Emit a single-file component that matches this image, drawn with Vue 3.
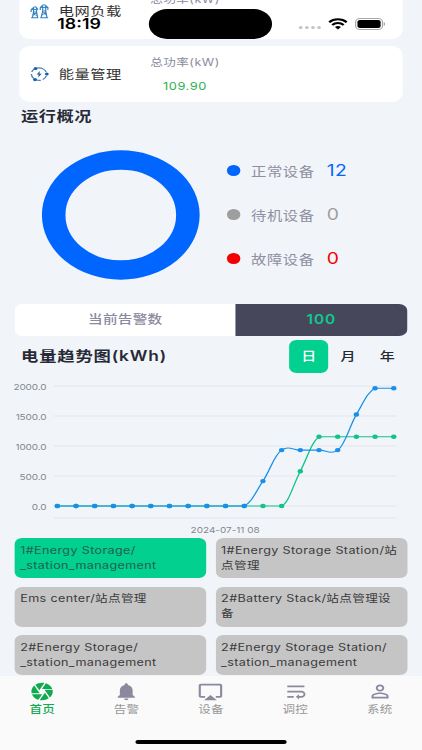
<script setup>
import { ref } from 'vue'

const meters = [
  { name: '电网负载', icon: 'grid', value: '' },
  { name: '能量管理', icon: 'energy', value: '109.90' }
]

const statuses = [
  { label: '正常设备', count: 12, color: '#0066ff' },
  { label: '待机设备', count: 0, color: '#9e9e9e' },
  { label: '故障设备', count: 0, color: '#f40000' }
]

const ranges = ['日', '月', '年']
const range = ref('日')

const ticks = ['2000.0', '1500.0', '1000.0', '500.0', '0.0']

// plot area: 2000 sits at y=6, 0 at y=126
const STEP = 15.32
const toY = v => 126 - v * 0.06
const toX = i => 3 + i * STEP

// [value, tangent] pairs, tangent is in px per step
const flat = n => Array.from({ length: n }, () => [0, 0])
const blue = [...flat(10), [0, -9], [415, -28], [932, -12], [932, 0], [932, 0], [932, -12], [1525, -32], [1963, -9], [1963, 0]]
const green = [...flat(12), [0, -9], [580, -36], [1153, -12], [1153, 0], [1153, 0], [1153, 0], [1153, 0]]

function linePath(points) {
  let d = `M${toX(0)} ${toY(points[0][0])}`
  for (let i = 1; i < points.length; i++) {
    const [pv, pt] = points[i - 1]
    const [v, t] = points[i]
    const same = pv === v && v !== 932
    const a = same ? 0 : pt * 0.4
    const b = same ? 0 : t * 0.4
    d += ` C${toX(i - 1) + STEP * 0.4} ${toY(pv) + a} ${toX(i) - STEP * 0.4} ${toY(v) - b} ${toX(i)} ${toY(v)}`
  }
  return d
}

const series = [
  { color: '#12c48b', points: green },
  { color: '#1890ea', points: blue }
]

const stations = [
  ['1#Energy Storage/', '_station_management'],
  ['1#Energy Storage Station/站', '点管理'],
  ['Ems center/站点管理'],
  ['2#Battery Stack/站点管理设', '备'],
  ['2#Energy Storage/', '_station_management'],
  ['2#Energy Storage Station/', '_station_management']
]
const station = ref(0)

const tabs = [
  { label: '首页', d: 'M9.4 10.5l4.77-8.26C13.47 2.09 12.75 2 12 2c-2.4 0-4.6.85-6.32 2.25l3.66 6.35.06-.1zM21.54 9c-.92-2.92-3.15-5.26-6-6.34L11.88 9h9.66zm.26 1h-7.49l.29.5 4.76 8.25C21 16.97 22 14.61 22 12c0-.69-.07-1.35-.2-2zM8.54 12l-3.9-6.75C3.01 7.03 2 9.39 2 12c0 .69.07 1.35.2 2h7.49l-1.15-2zm-6.08 3c.92 2.92 3.15 5.26 6 6.34L12.12 15H2.46zm11.27 0l-3.9 6.76c.7.15 1.42.24 2.17.24 2.4 0 4.6-.85 6.32-2.25l-3.66-6.35-.93 1.6z' },
  { label: '告警', d: 'M12 22c1.1 0 2-.9 2-2h-4c0 1.1.89 2 2 2zm6-6v-5c0-3.07-1.64-5.64-4.5-6.32V4c0-.83-.67-1.5-1.5-1.5s-1.5.67-1.5 1.5v.68C7.63 5.36 6 7.92 6 11v5l-2 2v1h16v-1l-2-2z' },
  { label: '设备', d: 'M6 22h12l-6-6zM21 3H3c-1.1 0-2 .9-2 2v12c0 1.1.9 2 2 2h4v-2H3V5h18v12h-4v2h4c1.1 0 2-.9 2-2V5c0-1.1-.9-2-2-2z' },
  { label: '调控', d: 'M4 19h6v-2H4v2zM20 5H4v2h16V5zm-3 6H4v2h13.25c1.1 0 2 .9 2 2s-.9 2-2 2H15v-2l-3 3 3 3v-2h2c2.21 0 4-1.79 4-4s-1.79-4-4-4z' },
  { label: '系统', d: 'M12 5.9c1.16 0 2.1.94 2.1 2.1s-.94 2.1-2.1 2.1S9.9 9.16 9.9 8s.94-2.1 2.1-2.1m0 9c2.97 0 6.1 1.46 6.1 2.1v1.1H5.9V17c0-.64 3.13-2.1 6.1-2.1M12 4C9.79 4 8 5.79 8 8s1.79 4 4 4 4-1.79 4-4-1.79-4-4-4zm0 9c-2.67 0-8 1.34-8 4v3h16v-3c0-2.66-5.33-4-8-4z' }
]
const tab = ref(0)
</script>

<template>
  <div class="screen">
    <main class="content">
      <section v-for="m in meters" :key="m.name" class="meter">
        <svg v-if="m.icon === 'grid'" class="meter-icon" viewBox="0 0 16 16" fill="none" stroke="#3584bf" stroke-width="1">
          <path d="M1.500 6.500 4 4h1.500L7 6.500M1.500 6.500V9M1.500 6.500H7M3.500 5v4l-1 5.500M6 5v4l.8 5.500M3.500 9h2.500M3.300 10l3 2.500M6 10l-3.300 2.500M1.500 14.700h6" />
          <path d="M9 4.500 11 2h2l2.300 2.500M9 4.500V7M9 4.500h6.300V7M11 3v5l-1.300 6.500M13.500 3v5l1 6.500M11 8h2.500M10.700 9l3.300 3M13.700 9l-3.500 3M9 14.700h6.500" />
        </svg>
        <svg v-else class="meter-icon" viewBox="0 0 16 16" fill="none" stroke="#4b80b4" stroke-width="1.100">
          <path d="M2 6A6.300 6.300 0 0 1 5 2.600M6.500 2A6.300 6.300 0 0 1 13.800 6M14 9.800a6.300 6.300 0 0 1-3 3.700M9.500 14.200a6.300 6.300 0 0 1-4-.500M3.700 12.500A6.300 6.300 0 0 1 1.700 8" />
          <g fill="#1762a8" stroke="none">
            <circle cx="5.200" cy="2.500" r="1.600" />
            <circle cx="14.400" cy="8" r="1.600" />
            <circle cx="4.700" cy="13.600" r="1.600" />
            <path d="M8.700 5 6 8.500h1.700L7.200 11.500 10.200 7.700H8.400z" />
          </g>
        </svg>
        <span class="meter-name">{{ m.name }}</span>
        <div class="meter-data">
          <span class="meter-label">总功率(kW)</span>
          <span class="meter-value">{{ m.value }}</span>
        </div>
      </section>

      <h2 class="title">运行概况</h2>

      <section class="overview">
        <svg class="donut" width="130" height="130" viewBox="0 0 130 130">
          <circle cx="65" cy="65" r="55" fill="none" stroke="#0066ff" stroke-width="19.300" />
        </svg>
        <ul class="legend">
          <li v-for="s in statuses" :key="s.label">
            <i class="dot" :style="{ background: s.color }"></i>
            <span class="legend-label">{{ s.label }}</span>
            <span class="legend-count" :style="{ color: s.color }">{{ s.count }}</span>
          </li>
        </ul>
      </section>

      <section class="alarm">
        <span class="alarm-label">当前告警数</span>
        <span class="alarm-count">100</span>
      </section>

      <header class="trend-head">
        <h2 class="title">电量趋势图(kWh)</h2>
        <div class="ranges">
          <button v-for="r in ranges" :key="r" :class="{ active: r === range }" @click="range = r">{{ r }}</button>
        </div>
      </header>

      <section class="chart">
        <div class="axis">
          <span v-for="t in ticks" :key="t">{{ t }}</span>
        </div>
        <div class="plot">
          <svg width="282" height="139" viewBox="0 0 282 139">
            <path v-for="y in [6, 36, 66, 96, 126, 138]" :key="y" :d="`M0 ${y}H281`" stroke="#e4e6eb" stroke-width="1" />
            <g v-for="s in series" :key="s.color">
              <path :d="linePath(s.points)" fill="none" :stroke="s.color" stroke-width="1.100" />
              <circle v-for="(p, i) in s.points" :key="i" :cx="toX(i)" :cy="toY(p[0])" r="2.200" :fill="s.color" />
            </g>
          </svg>
          <span class="date">2024-07-11 08</span>
        </div>
      </section>

      <section class="stations">
        <button v-for="(lines, i) in stations" :key="i" :class="{ active: i === station }" @click="station = i">
          <span v-for="l in lines" :key="l">{{ l }}</span>
        </button>
      </section>
    </main>

    <nav class="tabbar">
      <div class="tabs">
        <a v-for="(t, i) in tabs" :key="t.label" :class="{ active: i === tab }" @click="tab = i">
          <svg width="21" height="21" viewBox="0 0 24 24"><path :d="t.d" fill="currentColor" /></svg>
          <span>{{ t.label }}</span>
        </a>
      </div>
      <i class="home-bar"></i>
    </nav>

    <div class="status">
      <span class="time">18:19</span>
      <i class="island"></i>
      <span class="signal"><i v-for="n in 4" :key="n"></i></span>
      <svg class="wifi" width="16" height="12" viewBox="0 0 16 12" fill="none" stroke="#000" stroke-width="2">
        <path d="M.8 4.200a10.300 10.300 0 0 1 14.400 0M3.300 7a6.800 6.800 0 0 1 9.400 0" />
        <path d="M8 11.600 5.500 9.100a3.600 3.600 0 0 1 5 0z" fill="#000" stroke="none" />
      </svg>
      <svg class="battery" width="25" height="12" viewBox="0 0 25 12">
        <rect x=".5" y=".5" width="22" height="11" rx="3.500" fill="none" stroke="#a8a8a8" />
        <rect x="2" y="2" width="19" height="8" rx="2.200" />
        <path d="M23.500 4v4c1.600-.6 1.600-3.400 0-4z" fill="#a8a8a8" />
      </svg>
    </div>
  </div>
</template>

<style>
html,
body {
  overflow: hidden;
  background: #f1f5f9;
}
</style>

<style scoped>
.screen {
  position: relative;
  display: flex;
  flex-direction: column;
  width: 345.9px;
  height: 750px;
  overflow: hidden;
  transform: scaleX(1.22);
  transform-origin: 0 0;
  background: #f1f5f9;
  font-family: Inter, 'Noto Sans CJK SC', sans-serif;
  letter-spacing: 0.44px;
  color: #333;
}

.content {
  display: flex;
  flex-direction: column;
  height: 676px;
  overflow: hidden;
}

.meter {
  display: flex;
  align-items: center;
  flex-shrink: 0;
  height: 56.5px;
  margin: 0 15.6px 6.5px;
  padding-left: 8px;
  border-radius: 9px;
  background: #fff;
}

.meter:first-child { margin-top: -17.5px; }

.meter-icon {
  width: 16px;
  height: 16px;
}

.meter-name {
  width: 75px;
  margin-left: 8.5px;
  font-size: 12.5px;
}

.meter-data {
  display: flex;
  flex-direction: column;
  align-items: center;
  align-self: stretch;
  padding-top: 8px;
}

.meter-label {
  font-size: 10.3px;
  line-height: 17px;
  letter-spacing: 0.4px;
  color: #8c8ba0;
}

.meter-value {
  margin-top: 9px;
  font-size: 10.5px;
  line-height: 14px;
  color: #2ab24e;
}

.title {
  margin: 0;
  font-size: 14.1px;
  font-weight: 600;
  line-height: 20px;
  color: #272a36;
}

.content > .title {
  margin: -3px 0 0 17.2px;
}

.overview {
  display: flex;
  flex-shrink: 0;
  height: 130px;
  margin: 24.2px 0 0 33.6px;
}

.legend {
  display: flex;
  flex-direction: column;
  justify-content: space-between;
  height: 112px;
  margin: 9px 0 0 22.7px;
  padding: 0;
  list-style: none;
}

.legend li {
  display: flex;
  align-items: center;
  height: 24px;
}

.dot {
  width: 10.8px;
  height: 10.8px;
  border-radius: 50%;
}

.legend-label {
  width: 62px;
  margin-left: 8.7px;
  font-size: 12.6px;
  color: #8f8fa2;
}

.legend-count { font-size: 15.8px; }

.alarm {
  display: flex;
  flex-shrink: 0;
  height: 32.5px;
  margin: 24px 12.3px 0;
  border-radius: 7px;
  overflow: hidden;
  font-size: 12px;
  line-height: 32.5px;
  text-align: center;
}

.alarm-label {
  width: 180.8px;
  background: #fff;
  color: #8a8a9e;
  font-weight: 500;
  letter-spacing: 0.2px;
}

.alarm-count {
  flex: 1;
  background: #46475b;
  color: #12c88f;
  font-size: 12.6px;
  font-weight: 600;
  letter-spacing: 0.7px;
}

.trend-head {
  display: flex;
  justify-content: space-between;
  align-items: center;
  flex-shrink: 0;
  height: 32.5px;
  margin: 4px 12.3px 0 17.2px;
}

.trend-head .title {
  font-size: 14.2px;
  letter-spacing: 0.7px;
}

.ranges { display: flex; }

.ranges button {
  width: 32.2px;
  height: 32.5px;
  padding: 0;
  border: 0;
  border-radius: 6px;
  background: none;
  color: #272a36;
  font: 500 12.3px 'Noto Sans CJK SC', sans-serif;
}

.ranges .active {
  background: #02d08e;
  color: #fff;
}

.chart {
  display: flex;
  flex-shrink: 0;
  height: 165px;
  margin-top: 7.5px;
}

.axis {
  width: 38px;
  margin-right: 6.2px;
  font-size: 8.2px;
  line-height: 30px;
  text-align: right;
  letter-spacing: -0.1px;
  color: #85878d;
}

.axis span {
  display: block;
  height: 30px;
}

.axis span:first-child { margin-top: -8.5px; }

.plot {
  display: flex;
  flex-direction: column;
}

.date {
  margin: 4.5px 0 0 112px;
  font-size: 8.2px;
  line-height: 12px;
  letter-spacing: 0;
  color: #85878d;
}

.stations {
  display: grid;
  grid-template-columns: 1fr 1fr;
  gap: 8.5px 8px;
  margin: -7px 12.3px 0;
}

.stations button {
  display: flex;
  flex-direction: column;
  height: 40px;
  padding: 4.5px 0 0 4.3px;
  border: 0;
  border-radius: 6px;
  background: #c5c5c5;
  color: #3a3a3d;
  font-family: inherit;
  font-size: 10.3px;
  line-height: 15.3px;
  letter-spacing: 0.3px;
  text-align: left;
  white-space: nowrap;
}

.stations .active {
  background: #02d08e;
  color: #225f4b;
}

.tabbar {
  display: flex;
  flex-direction: column;
  align-items: center;
  flex: 1;
  background: #fafafa;
}

.tabs {
  display: flex;
  width: 100%;
  height: 63.5px;
}

.tabs a {
  display: flex;
  flex: 1;
  flex-direction: column;
  align-items: center;
  padding-top: 4.5px;
  color: #8a899d;
}

.tabs span {
  font-size: 10.3px;
  line-height: 15px;
  letter-spacing: 0.2px;
  color: #989898;
}

.tabs .active,
.tabs .active span {
  color: #12aa50;
}

.tabs .active span { font-weight: 500; }

.home-bar {
  width: 123.8px;
  height: 4.3px;
  border-radius: 3px;
  background: #000;
}

/* status bar floats over the scrolled cards */
.status {
  position: absolute;
  top: 0;
  left: 0;
  display: flex;
  align-items: center;
  width: 100%;
  height: 47.5px;
}

.time {
  width: 74.5px;
  margin: 1px 0 0 47px;
  font-size: 14.6px;
  font-weight: 600;
  letter-spacing: 0;
  color: #000;
}

.island {
  width: 101.2px;
  height: 29.5px;
  border-radius: 15px;
  background: #000;
}

.signal {
  display: flex;
  gap: 1.6px;
  margin: 7px 6px 0 22px;
}

.signal i {
  width: 3.4px;
  height: 3.4px;
  border-radius: 50%;
  background: #c4c4c4;
}

.battery { margin-left: 5.5px; }
</style>
